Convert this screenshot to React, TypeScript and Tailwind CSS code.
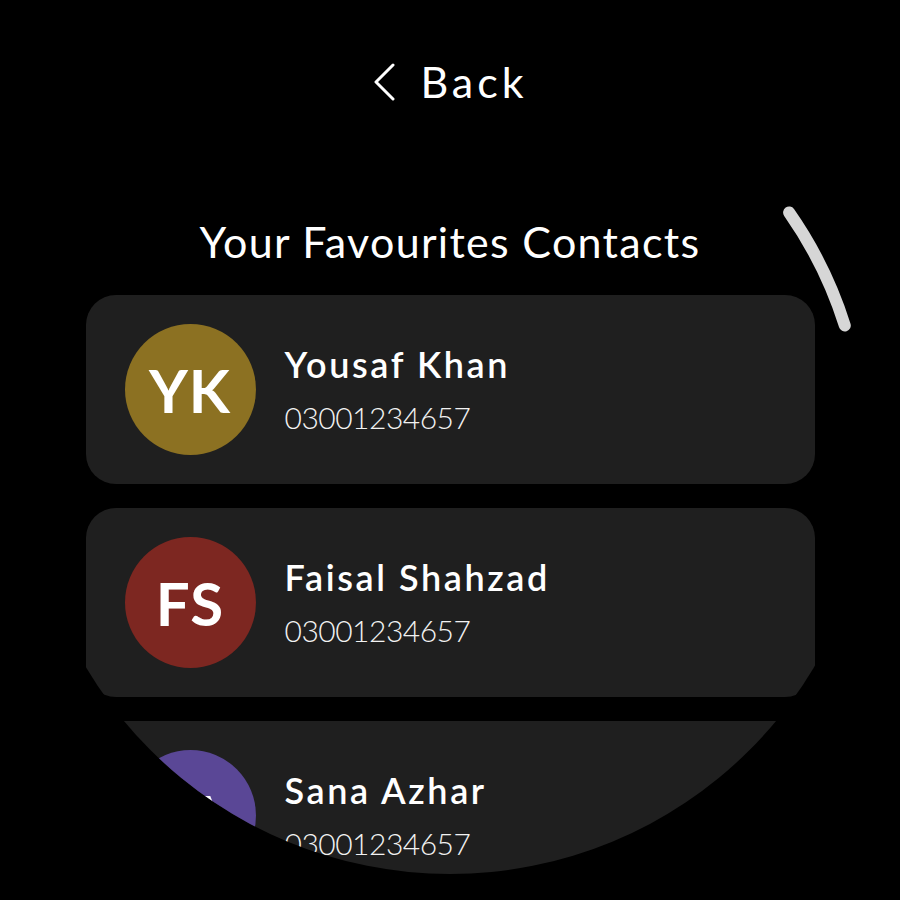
import React from "react";

type Contact = { id: string; name: string; phone: string; initials: string; color: string };

const contacts: Contact[] = [
  { id: "1", name: "Yousaf Khan", phone: "03001234657", initials: "YK", color: "bg-[#8c7122]" },
  { id: "2", name: "Faisal Shahzad", phone: "03001234657", initials: "FS", color: "bg-[#7d2721]" },
  { id: "3", name: "Sana Azhar", phone: "03001234657", initials: "SA", color: "bg-[#5a4796]" },
];

function ContactCard({ contact }: { contact: Contact }) {
  return (
    <div className="flex h-[189px] w-[729px] shrink-0 items-center rounded-[30px] bg-[#1f1f1f] pl-[39px]">
      <div
        className={`flex h-[131px] w-[131px] shrink-0 items-center justify-center rounded-full ${contact.color} text-[60px] font-bold tracking-[1px] text-white`}
      >
        {contact.initials}
      </div>
      <div className="ml-[29px] flex flex-col text-white">
        <span className="text-[36px] font-semibold leading-[44px] tracking-[2.6px]">{contact.name}</span>
        <span className="mt-[11px] text-[30px] font-light leading-[40px] tracking-[-0.5px] text-[#f2f2f2]">{contact.phone}</span>
      </div>
    </div>
  );
}

export default function App() {
  return (
    <div
      className="relative flex h-[900px] w-[900px] items-center justify-center bg-black"
      style={{ fontFamily: "Lato, 'Noto Sans', sans-serif" }}
    >
      <div className="flex h-[848px] w-[848px] flex-col items-center overflow-hidden rounded-full bg-black">
        <button className="mt-[34px] flex h-[50px] items-center gap-[24px] text-white">
          <svg width="24" height="38" viewBox="0 0 24 38" fill="none">
            <path d="M21 2 L4 19 L21 36" stroke="white" strokeWidth="3" strokeLinecap="round" strokeLinejoin="round" />
          </svg>
          <span className="text-[43px] font-normal leading-none tracking-[4px]">Back</span>
        </button>

        <h1 className="mt-[114px] text-[43px] font-normal leading-[50px] tracking-[1.3px] text-white">
          Your Favourites Contacts
        </h1>

        <div className="mt-[28px] flex flex-col gap-[24px]">
          {contacts.map((c) => (
            <ContactCard key={c.id} contact={c} />
          ))}
        </div>
      </div>

      {/* scroll indicator */}
      <svg className="pointer-events-none absolute inset-0" width="900" height="900" viewBox="0 0 900 900">
        <path
          d="M789.1 212.5 A414 414 0 0 1 844.8 325.5"
          stroke="#d6d6d6"
          strokeWidth="12"
          strokeLinecap="round"
          fill="none"
        />
      </svg>
    </div>
  );
}
